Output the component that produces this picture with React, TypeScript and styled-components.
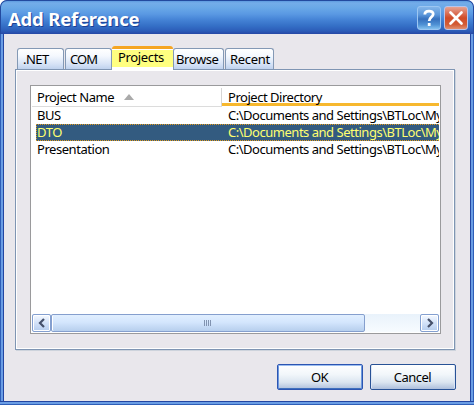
import React from "react";
import styled, { createGlobalStyle, css } from "styled-components";

const Global = createGlobalStyle`
  * { box-sizing: border-box; }
  body { margin: 0; background: #fff; }
`;

const Dialog = styled.div`
  width: 474px;
  height: 405px;
  display: flex;
  flex-direction: column;
  overflow: hidden;
  border-radius: 7px 7px 0 0;
  background: #2b55b4;
  font: 13px/17px "Noto Sans", "Open Sans", sans-serif;
  letter-spacing: -0.45px;
  color: #000;
`;

const TitleBar = styled.header`
  flex: none;
  height: 34px;
  display: flex;
  align-items: center;
  padding: 4px 5px 0 7px;
  border-radius: 7px 7px 0 0;
  border: 1px solid #234a9f;
  border-bottom: 0;
  background: linear-gradient(#5d9be0 0, #74ade9 2px, #69a8e7 7px, #5a99e3 13px, #4482d5 19px, #346fc6 25px, #2c5cb8 30px, #2647a5 33px);
`;

const Title = styled.h1`
  flex: 1;
  margin: 0 0 1px;
  font: bold 18.5px/24px "Noto Sans", "Open Sans", sans-serif;
  letter-spacing: -0.2px;
  color: #fff;
  text-shadow: 1px 1px 0 #1b3f94;
`;

const CaptionButton = styled.button<{ $close?: boolean }>`
  width: 24px;
  height: 24px;
  padding: 0;
  margin: 0 0 4px 3px;
  display: grid;
  place-items: center;
  border: 1px solid ${(p) => (p.$close ? "#b9c4ea" : "#9cc6f2")};
  border-radius: 3px;
  background: ${(p) =>
    p.$close
      ? "linear-gradient(#e5a392, #dc765e 25%, #d04b27 50%, #d35d37 80%, #e19070)"
      : "linear-gradient(#83b5e9, #5c97da 35%, #3670bd 55%, #4f91d5 80%, #83c0ee)"};
`;

const Frame = styled.main`
  flex: 1;
  min-height: 0;
  display: flex;
  flex-direction: column;
  border: solid;
  border-width: 0 4px 4px;
  border-color: #2b55b4;
  background: #e9e7ec;
  border-image: linear-gradient(90deg, #2e5eb8 0 1px, #6a9de4 1px 3px, #2346a2 3px 4px, #2346a2 470px 471px, #6a9de4 471px 473px, #2e5eb8 473px) 0 4 4 4;
`;

const BottomEdge = styled.div`
  flex: none;
  height: 4px;
  margin-top: -4px;
  position: relative;
  background: linear-gradient(#2346a2 0 1px, #6a9de4 1px 3px, #2e5eb8 3px);
`;

const TabStrip = styled.nav`
  flex: none;
  height: 35px;
  display: flex;
  align-items: flex-end;
  padding: 0 13px;
  z-index: 1;
`;

const Tab = styled.div<{ $w: number; $active?: boolean; $gap?: number; $pad?: number; $ls?: number }>`
  width: ${(p) => p.$w}px;
  height: 21px;
  margin-left: ${(p) => p.$gap ?? 0}px;
  padding: 2px 0 0 ${(p) => p.$pad ?? 4}px;
  letter-spacing: ${(p) => p.$ls ?? 0}px;
  border: 1px solid #8499b5;
  border-bottom: 0;
  border-radius: 3px 3px 0 0;
  white-space: nowrap;
  background: linear-gradient(#fff, #f4f8fe 35%, #d7e3f6 75%, #bfd2ee);
  ${(p) =>
    p.$active &&
    css`
      height: 24px;
      margin-bottom: -1px;
      padding-top: 0;
      border: 0;
      border-top: 3px solid #f5a522;
      background: linear-gradient(#fff 0 1px, #ffff80 1px 18px, #fff 18px);
    `}
`;

const Panel = styled.section`
  flex: none;
  width: 440px;
  height: 281px;
  margin-left: 11px;
  padding: 15px 13px 15px 14px;
  border: 1px solid #7f95b3;
  box-shadow: inset 1px 1px #fff, inset -1px -1px #fff, 1px 1px #cdd3dc;
`;

const List = styled.div`
  width: 411px;
  height: 249px;
  display: flex;
  flex-direction: column;
  padding: 0 1px 1px;
  border: 1px solid #9a9a9c;
  background: #fff;
`;

const Header = styled.div`
  flex: none;
  height: 21px;
  display: flex;
`;

const NameHeader = styled.div`
  width: 190px;
  padding: 3px 0 0 5px;
  border-bottom: 1px solid #dcdcdc;
  background: linear-gradient(#d5d5d5, #d5d5d5) 100% 100% / 1px 18px no-repeat;
  display: flex;
  gap: 10px;
`;

const DirectoryHeader = styled.div`
  flex: 1;
  height: 20px;
  padding: 3px 0 0 6px;
  border-bottom: 3px solid #f7b82e;
  letter-spacing: -0.47px;
`;

const Rows = styled.div`
  flex: 1;
  padding: 0 0 0 4px;
`;

const Row = styled.div<{ $selected?: boolean }>`
  height: 17px;
  display: grid;
  grid-template-columns: 191px 1fr;
  white-space: nowrap;
  border: 1px solid transparent;
  border-right: 0;
  line-height: 17px;
  ${(p) =>
    p.$selected &&
    css`
      background: #335b80;
      color: #ffff70;
      border: 1px dotted #e09a20;
      border-right: 0;
    `}
`;

const Cell = styled.span`
  height: 17px;
  margin-top: -1px;
`;

const Directory = styled(Cell)`
  letter-spacing: -0.48px;
  min-width: 0;
  overflow: hidden;
`;

const ScrollBar = styled.div`
  flex: none;
  height: 18px;
  display: flex;
  background: linear-gradient(#e9f2fb, #f7fbff);
`;

const Arrow = styled.button`
  width: 19px;
  padding: 0;
  display: grid;
  place-items: center;
  border: 1px solid #839fd0;
  border-radius: 2px;
  box-shadow: inset 0 0 0 1px #fff;
  background: linear-gradient(#f5f9ff, #d3e2f9 50%, #b5cdee);
`;

const Thumb = styled.div`
  width: 314px;
  display: grid;
  place-items: center;
  border: 1px solid #859fce;
  border-radius: 2px;
  box-shadow: inset 1px 0 #fff;
  background: linear-gradient(#e1efff, #d4e6fd 45%, #b7cfed);
`;

const Track = styled.div`
  flex: 1;
`;

const Actions = styled.footer`
  display: flex;
  gap: 7px;
  justify-content: flex-end;
  padding: 14px 14px 0 0;
`;

const Action = styled.button<{ $default?: boolean }>`
  width: 86px;
  height: 26px;
  padding: 0 1px 0 0;
  font: 13px/20px "Noto Sans", "Open Sans", sans-serif;
  letter-spacing: -0.5px;
  color: #000;
  border: 1px solid ${(p) => (p.$default ? "#2c55b2" : "#285296")};
  border-radius: 2px;
  background: linear-gradient(#fff, #f1f6fa 40%, #dbe5f0 72%, #aebfdc);
  box-shadow: ${(p) =>
    p.$default
      ? "inset 0 1px #9bbdf0, inset 1px 0 #6d98df, inset -1px 0 #6f99dc, inset 0 -1px #3f6fbd"
      : "inset 1px 0 #dce5f4, inset -1px 0 #dce5f4"};
`;

const projects = ["BUS", "DTO", "Presentation"];

export default function App() {
  return (
    <>
      <Global />
      <Dialog>
        <TitleBar>
          <Title>Add Reference</Title>
          <CaptionButton aria-label="Help">
            <svg width="14" height="18" viewBox="0 0 14 18" fill="none" stroke="#fff" strokeWidth="2.8">
              <path d="M2.8 5.5C2.8 1 11.2 1 11.2 5C11.2 8 7.2 8.2 7.2 12" />
              <path d="M7.2 14V17" />
            </svg>
          </CaptionButton>
          <CaptionButton $close aria-label="Close">
            <svg width="16" height="16" viewBox="0 0 16 16" stroke="#fff" strokeWidth="2.7" strokeLinecap="round">
              <path d="M2.5 2.5L13.5 13.5M13.5 2.5L2.5 13.5" />
            </svg>
          </CaptionButton>
        </TitleBar>
        <Frame>
          <TabStrip>
            <Tab $w={47} $pad={5} $ls={-0.5}>.NET</Tab>
            <Tab $w={47} $gap={1} $ls={-0.9}>COM</Tab>
            <Tab $w={61} $pad={6} $ls={-0.35} $active>Projects</Tab>
            <Tab $w={51} $pad={2} $ls={-0.4}>Browse</Tab>
            <Tab $w={49} $gap={1} $ls={-0.3}>Recent</Tab>
          </TabStrip>
          <Panel>
            <List>
              <Header>
                <NameHeader>
                  Project Name
                  <svg width="10" height="17" viewBox="0 0 10 17">
                    <path d="M0 11L5 5L10 11Z" fill="#aaa" />
                  </svg>
                </NameHeader>
                <DirectoryHeader>Project Directory</DirectoryHeader>
              </Header>
              <Rows>
                {projects.map((name) => (
                  <Row key={name} $selected={name === "DTO"}>
                    <Cell>{name}</Cell>
                    <Directory>{"C:\\Documents and Settings\\BTLoc\\My"}</Directory>
                  </Row>
                ))}
              </Rows>
              <ScrollBar>
                <Arrow aria-label="Scroll left">
                  <svg width="8" height="10" viewBox="0 0 8 10" fill="none" stroke="#45506a" strokeWidth="2.2">
                    <path d="M6 1L2 5L6 9" />
                  </svg>
                </Arrow>
                <Thumb>
                  <svg width="8" height="6" viewBox="0 0 8 6" stroke="#8193b0">
                    <path d="M.5 0V6M2.5 0V6M4.5 0V6M6.5 0V6" />
                  </svg>
                </Thumb>
                <Track />
                <Arrow aria-label="Scroll right">
                  <svg width="8" height="10" viewBox="0 0 8 10" fill="none" stroke="#45506a" strokeWidth="2.2">
                    <path d="M2 1L6 5L2 9" />
                  </svg>
                </Arrow>
              </ScrollBar>
            </List>
          </Panel>
          <Actions>
            <Action $default>OK</Action>
            <Action>Cancel</Action>
          </Actions>
        </Frame>
        <BottomEdge />
      </Dialog>
    </>
  );
}
